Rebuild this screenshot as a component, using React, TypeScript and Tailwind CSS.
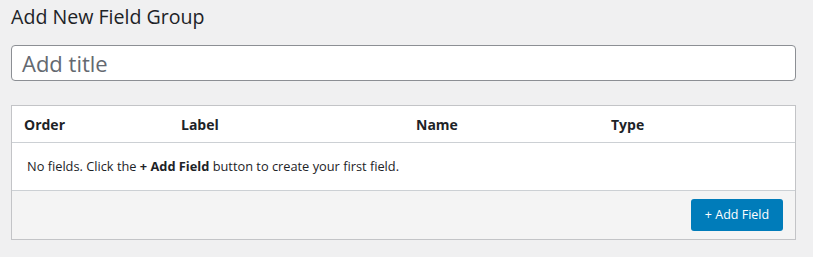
export default function App() {
  return (
    <div
      className="w-[813px] h-[257px] bg-[#f0f0f1] overflow-hidden pl-[11px]"
      style={{ fontFamily: '"Open Sans", "Noto Sans", sans-serif' }}
    >
      <h1 className="pt-[2px] text-[19.6px] leading-[30px] text-[#1d2327] font-normal">
        Add New Field Group
      </h1>
      <div className="mt-[13px] w-[785px] h-[36px] bg-white border border-[#8c8f94] rounded-[4px] flex items-center px-[10px]">
        <span className="text-[22px] text-[#646970] leading-none">Add title</span>
      </div>
      <div className="mt-[24px] w-[785px] border border-[#c3c4c7] bg-white">
        <div className="h-[37px] border-b border-[#ccd0d4] flex items-center text-[14px] font-bold text-[#1d2327]">
          <div className="w-[169px] pl-[12px]">Order</div>
          <div className="w-[235px]">Label</div>
          <div className="w-[195px]">Name</div>
          <div>Type</div>
        </div>
        <div className="h-[47px] flex items-center pl-[15px] text-[12.8px] text-[#1d2327]">
          <span>
            No fields. Click the <b>+ Add Field</b> button to create your first field.
          </span>
        </div>
        <div className="h-[49px] bg-[#f4f4f4] border-t border-[#ccd0d4] flex items-center justify-end pr-[12px]">
          <button className="w-[92px] h-[32px] bg-[#007cba] rounded-[3px] text-white text-[12.5px] flex items-center justify-center">
            + Add Field
          </button>
        </div>
      </div>
    </div>
  );
}
